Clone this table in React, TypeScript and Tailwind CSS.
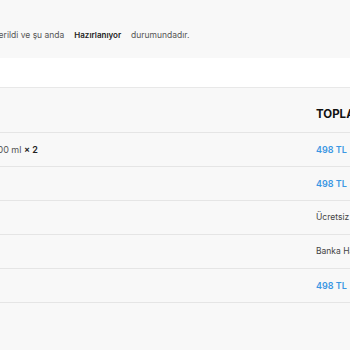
export default function App() {
  const rows = [
    { label: '500 ml', qty: '2', value: '498 TL', blue: true },
    { label: '', value: '498 TL', blue: true },
    { label: '', value: 'Ücretsiz', blue: false },
    { label: '', value: 'Banka Havalesi', blue: false },
    { label: '', value: '498 TL', blue: true },
  ]

  return (
    <div className="w-[350px] h-[350px] overflow-hidden bg-[#f8f8f8] font-['Inter',sans-serif]">
      <div className="h-[58px] pt-[29px]">
        <p className="-ml-[6px] whitespace-nowrap text-[8.5px] leading-[12px] text-[#555]">
          verildi ve şu anda
          <span className="mx-[10px] text-[8px] font-semibold text-[#222]">Hazırlanıyor</span>
          durumundadır.
        </p>
      </div>
      <div className="h-[30px] bg-white border-b border-[#e8e8e8]" />

      <div className="grid grid-cols-[316px_1fr] h-[45px] border-b border-[#e5e5e5] items-center pt-[10px]">
        <div />
        <div className="whitespace-nowrap text-[11.5px] font-bold text-[#111]">TOPLAM</div>
      </div>

      {rows.map((row, i) => (
        <div key={i} className="grid grid-cols-[316px_1fr] h-[34px] border-b border-[#e5e5e5] items-center">
          <div className="whitespace-nowrap text-[9px] text-[#555]">
            {row.label && (
              <span className="-ml-[8px]">
                {row.label} <span className="font-semibold text-[#222]">× {row.qty}</span>
              </span>
            )}
          </div>
          <div
            className={
              row.blue
                ? 'whitespace-nowrap text-[9px] font-semibold text-[#3b97e3]'
                : 'whitespace-nowrap text-[8.5px] text-[#444]'
            }
          >
            {row.value}
          </div>
        </div>
      ))}
    </div>
  )
}
